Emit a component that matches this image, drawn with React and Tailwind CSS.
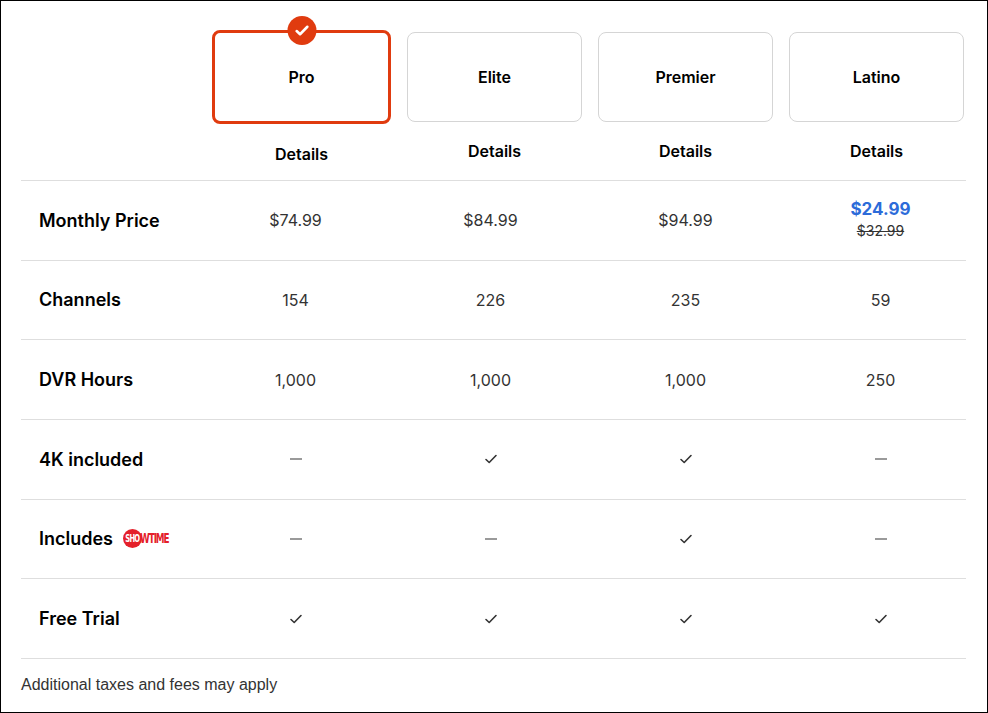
const Check = ({ c = "#333", s = 14, w = 1.6 }) => (
  <svg width={s} height={s} viewBox="0 0 14 14" fill="none"><path d="M2 7.5l3.2 3L12 3.5" stroke={c} strokeWidth={w} strokeLinecap="round" strokeLinejoin="round" /></svg>
);
const Dash = () => <div className="w-[12px] h-[2px] bg-[#9a9a9a] mx-auto" />;

const Showtime = () => (
  <span className="inline-flex items-center ml-[10px]" style={{ fontFamily: "'Liberation Sans Narrow','DejaVu Sans Condensed',sans-serif" }}>
    <span className="w-[19px] h-[19px] rounded-full bg-[#e4202a] flex items-center justify-center text-white font-bold text-[10px] tracking-[-1px]"><span className="inline-block scale-x-75">SHO</span></span>
    <span className="text-[#e4202a] font-bold text-[14px] -ml-[2px] tracking-[-1.5px] inline-block origin-left scale-x-[0.7] w-[36px]">WTIME</span>
  </span>
);

const rows = [
  ["Monthly Price", ["$74.99", "$84.99", "$94.99", "price"]],
  ["Channels", ["154", "226", "235", "59"]],
  ["DVR Hours", ["1,000", "1,000", "1,000", "250"]],
  ["4K included", ["-", "v", "v", "-"]],
  ["Includes", ["-", "-", "v", "-"]],
  ["Free Trial", ["v", "v", "v", "v"]],
];

function Cell({ v }) {
  if (v === "-") return <Dash />;
  if (v === "v") return <div className="flex justify-center"><Check /></div>;
  if (v === "price")
    return (
      <div className="flex flex-col items-center leading-[22px]">
        <span className="text-[#2c6bd9] font-bold text-[17px]">$24.99</span>
        <span className="text-[#333] text-[14px] line-through">$32.99</span>
      </div>
    );
  return <span className="text-[16px] text-[#333]">{v}</span>;
}

export default function App() {
  const font = { fontFamily: "Inter, 'Noto Sans', sans-serif" };
  const plans = ["Pro", "Elite", "Premier", "Latino"];
  return (
    <div className="w-[988px] h-[713px] border border-black bg-white overflow-hidden box-border" style={font}>
      <div className="pl-[20px]">
        <div className="flex pl-[191px] pt-[29px] gap-[16px]">
          {plans.map((p, i) =>
            i === 0 ? (
              <div key={p} className="relative w-[179px] h-[94px] border-[3px] border-[#e03b0f] rounded-[8px] flex items-center justify-center font-semibold text-[16px] text-black">
                {p}
                <div className="absolute -top-[17px] left-1/2 -translate-x-1/2 w-[29px] h-[29px] rounded-full bg-[#e03b0f] flex items-center justify-center">
                  <Check c="#fff" s={15} w={2.4} />
                </div>
              </div>
            ) : (
              <div key={p} className="w-[175px] h-[90px] mt-[2px] border border-[#d5d5d5] rounded-[8px] flex items-center justify-center font-semibold text-[16px] text-black">
                {p}
              </div>
            )
          )}
        </div>
        <div className="flex pl-[191px] gap-[16px] h-[56px] items-center text-[16px] font-semibold text-black">
          {plans.map((p, i) => (
            <div key={p} className={"text-center " + (i === 0 ? "mt-[4px] w-[179px]" : "-mt-[2px] w-[175px]")}>Details</div>
          ))}
        </div>
        <div className="w-[945px] border-t border-[#dedede]">
          {rows.map(([label, vals]) => (
            <div key={label} className="grid grid-cols-[180px_195px_195px_195px_195px] h-[79.67px] items-center border-b border-[#dedede]">
              <div className="pl-[18px] font-semibold text-[18px] text-black flex items-center">
                {label}
                {label === "Includes" && <Showtime />}
              </div>
              {vals.map((v, i) => (
                <div key={i} className="text-center -ml-[6px]"><Cell v={v} /></div>
              ))}
            </div>
          ))}
        </div>
        <div className="pt-[14px] text-[16px] text-[#333]" style={{ fontFamily: "'Liberation Sans', Arial, sans-serif" }}>
          Additional taxes and fees may apply
        </div>
      </div>
    </div>
  );
}
